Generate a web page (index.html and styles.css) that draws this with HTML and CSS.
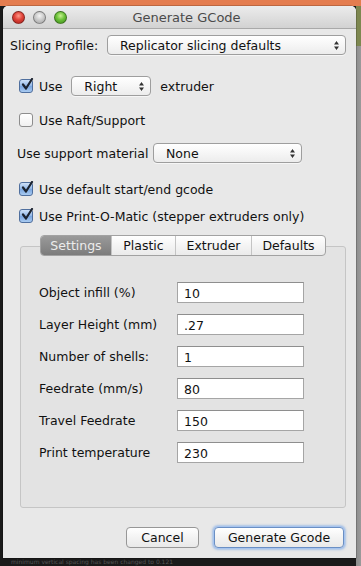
FILE: index.html
```html
<!DOCTYPE html>
<html>
<head>
<meta charset="utf-8">
<link rel="stylesheet" href="styles.css">
</head>
<body>
<div class="desktop">
  <div class="window">
    <div class="titlebar">
      <div class="lights">
        <span class="light red"></span>
        <span class="light gray"></span>
        <span class="light green"></span>
      </div>
      <div class="title">Generate GCode</div>
    </div>
    <div class="content">
      <div class="row r1">
        <span class="lbl">Slicing Profile:</span>
        <div class="popup wide"><span>Replicator slicing defaults</span><svg class="arr" width="7" height="11" viewBox="0 0 7 11"><path d="M3.5 1 L6 4.5 H1 Z M3.5 10 L6 6.5 H1 Z" fill="#333"/></svg></div>
      </div>
      <div class="row r2">
        <span class="cb on"><svg width="14" height="14" viewBox="0 0 14 14"><path d="M3 6.5 L6 10.5 L12 1" fill="none" stroke="#1c2430" stroke-width="2.2" stroke-linecap="round" stroke-linejoin="round"/></svg></span>
        <span class="cbl">Use</span>
        <div class="popup small"><span>Right</span><svg class="arr" width="7" height="11" viewBox="0 0 7 11"><path d="M3.5 1 L6 4.5 H1 Z M3.5 10 L6 6.5 H1 Z" fill="#333"/></svg></div>
        <span class="after">extruder</span>
      </div>
      <div class="row r3">
        <span class="cb"></span>
        <span class="cbl">Use Raft/Support</span>
      </div>
      <div class="row r4">
        <span class="lbl2">Use support material</span>
        <div class="popup mid"><span>None</span><svg class="arr" width="7" height="11" viewBox="0 0 7 11"><path d="M3.5 1 L6 4.5 H1 Z M3.5 10 L6 6.5 H1 Z" fill="#333"/></svg></div>
      </div>
      <div class="row r5">
        <span class="cb on"><svg width="14" height="14" viewBox="0 0 14 14"><path d="M3 6.5 L6 10.5 L12 1" fill="none" stroke="#1c2430" stroke-width="2.2" stroke-linecap="round" stroke-linejoin="round"/></svg></span>
        <span class="cbl">Use default start/end gcode</span>
      </div>
      <div class="row r6">
        <span class="cb on"><svg width="14" height="14" viewBox="0 0 14 14"><path d="M3 6.5 L6 10.5 L12 1" fill="none" stroke="#1c2430" stroke-width="2.2" stroke-linecap="round" stroke-linejoin="round"/></svg></span>
        <span class="cbl">Use Print-O-Matic (stepper extruders only)</span>
      </div>
      <div class="tabs">
        <span class="tab sel t1">Settings</span><span class="tab t2">Plastic</span><span class="tab t3">Extruder</span><span class="tab t4">Defaults</span>
      </div>
      <div class="group">
        <div class="field"><span class="flbl">Object infill (%)</span><span class="input">10</span></div>
        <div class="field"><span class="flbl">Layer Height (mm)</span><span class="input">.27</span></div>
        <div class="field"><span class="flbl">Number of shells:</span><span class="input">1</span></div>
        <div class="field"><span class="flbl">Feedrate (mm/s)</span><span class="input">80</span></div>
        <div class="field"><span class="flbl">Travel Feedrate</span><span class="input">150</span></div>
        <div class="field"><span class="flbl">Print temperature</span><span class="input">230</span></div>
      </div>
      <div class="buttons">
        <span class="btn cancel">Cancel</span>
        <span class="btn default">Generate Gcode</span>
      </div>
    </div>
  </div>
  <div class="below">minimum vertical spacing has been changed to 0.121</div>
</div>
</body>
</html>
```

FILE: styles.css
```css
* { box-sizing: border-box; }
html, body { margin: 0; padding: 0; }
body {
  width: 361px;
  height: 566px;
  overflow: hidden;
  background: #101010;
  font-family: "DejaVu Sans", sans-serif;
  font-size: 12.5px;
  color: #111;
}
.desktop {
  width: 361px;
  height: 566px;
  padding: 6px 0 0 3px;
  background:
    linear-gradient(#e47d4f 0, #e47d4f 6px, transparent 6px),
    linear-gradient(to right, transparent 356px, #7d8750 356px) 0 0 / 100% 46px no-repeat,
    linear-gradient(to right, #1a1a1a 0, #1a1a1a 356px, #8c8c8c 356px, #9a9a9a 361px);
}
.window {
  width: 353px;
  height: 552px;
  background: #e8e8e8;
  border-radius: 5px 5px 0 0;
  overflow: hidden;
  box-shadow: 0 0 0 0.5px rgba(0,0,0,0.35);
}
.titlebar {
  height: 23px;
  display: flex;
  align-items: center;
  position: relative;
  background: linear-gradient(#ececec, #d2d2d2);
  border-bottom: 1px solid #a9a9a9;
}
.lights {
  display: flex;
  gap: 8px;
  padding-left: 9px;
}
.light {
  width: 13px;
  height: 13px;
  border-radius: 50%;
  border: 1px solid rgba(0,0,0,0.35);
}
.red { background: radial-gradient(circle at 50% 35%, #ff9a8a 0, #e0443a 45%, #a8201a 100%); }
.gray { background: radial-gradient(circle at 50% 35%, #f4f4f4 0, #c8c8c8 50%, #a0a0a0 100%); }
.green { background: radial-gradient(circle at 50% 35%, #c8f090 0, #6cc23a 45%, #3e8a1a 100%); }
.title {
  flex: 1;
  text-align: center;
  margin-left: -50px;
  font-size: 13px;
  color: #4a4a4a;
}
.content {
  padding: 5px 0 0 7px;
}
.row {
  display: flex;
  align-items: center;
  height: 22px;
}
.r1 { margin-top: 0; }
.r2 { margin-top: 19px; padding-left: 9px; }
.r3 { margin-top: 12px; padding-left: 9px; }
.r4 { margin-top: 11px; padding-left: 7px; }
.r5 { margin-top: 14px; padding-left: 9px; }
.r6 { margin-top: 5px; padding-left: 9px; }
.lbl { width: 97px; }
.lbl2 { width: 136px; }
.popup {
  height: 20px;
  border: 1px solid #9e9e9e;
  border-radius: 4px;
  background: linear-gradient(#ffffff, #f6f6f6 50%, #ececec);
  display: flex;
  align-items: center;
  justify-content: space-between;
  padding: 0 5px 0 12px;
  box-shadow: 0 1px 0 rgba(255,255,255,0.6);
}
.popup.wide { width: 239px; }
.popup.small { width: 80px; padding-left: 12px; margin-left: 9px; }
.popup.mid { width: 149px; padding-left: 12px; }
.arr { flex: none; }
.after { margin-left: 9px; }
.cb {
  width: 14px;
  height: 14px;
  border-radius: 3px;
  border: 1px solid #8d8d8d;
  background: linear-gradient(#ffffff, #f0f0f0);
  flex: none;
  position: relative;
}
.cb.on {
  border-color: #4f6f9e;
  background: linear-gradient(#cfe2f8, #8fb5e6 50%, #7aa6e0 51%, #a8caf0);
}
.cb svg { position: absolute; left: 0; top: -2px; }
.cbl { margin-left: 6px; }
.tabs {
  position: relative;
  z-index: 1;
  display: flex;
  margin: 8px 0 0 30px;
  width: 286px;
  height: 21px;
  border: 1px solid #a2a2a2;
  border-radius: 4px;
  background: linear-gradient(#ffffff, #f4f4f4 50%, #ebebeb);
  overflow: hidden;
}
.tab {
  display: flex;
  align-items: center;
  justify-content: center;
  border-left: 1px solid #c4c4c4;
  height: 100%;
}
.tab:first-child { border-left: none; }
.t1 { width: 70px; }
.t2 { width: 64px; }
.t3 { width: 76px; }
.t4 { flex: 1; }
.tab.sel {
  background: linear-gradient(#9a9a9a, #7c7c7c);
  color: #ececec;
}
.group {
  margin: -10px 0 0 10px;
  width: 326px;
  height: 262px;
  border: 1px solid #c5c5c5;
  border-radius: 3px;
  background: #e3e3e3;
  padding: 35px 0 0 18px;
}
.field {
  display: flex;
  align-items: center;
  height: 21px;
  margin-bottom: 11px;
}
.flbl { width: 138px; }
.input {
  width: 127px;
  height: 21px;
  background: #fff;
  border: 1px solid #a5a5a5;
  border-top-color: #8e8e8e;
  padding: 2px 0 0 6px;
  display: flex;
  align-items: center;
}
.buttons {
  display: flex;
  justify-content: flex-end;
  gap: 15px;
  margin-top: 19px;
  padding-right: 12px;
}
.btn {
  height: 21px;
  display: flex;
  align-items: center;
  justify-content: center;
  border: 1px solid #979797;
  border-radius: 4px;
  background: linear-gradient(#ffffff, #f3f3f3 50%, #e9e9e9);
}
.cancel { width: 73px; }
.default {
  width: 130px;
  border-color: #6a8fc4;
  box-shadow: 0 0 0 1px #a7c4ee, 0 0 2px 2px rgba(110,160,230,0.5);
}
.below {
  color: #555;
  font-size: 6px;
  padding: 0 0 0 8px;
  white-space: nowrap;
  overflow: hidden;
  height: 8px;
  line-height: 8px;
}
```
